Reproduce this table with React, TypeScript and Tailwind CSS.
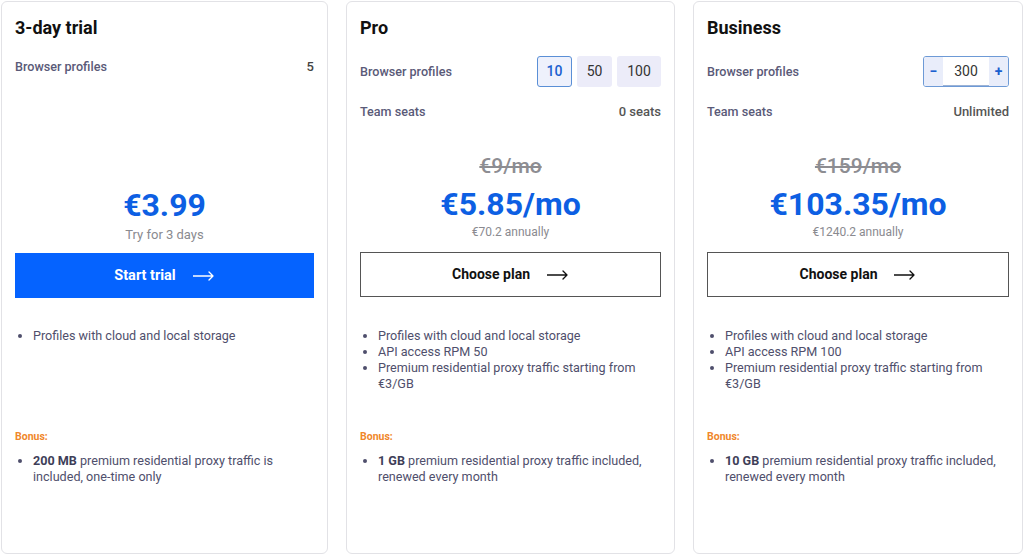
import { ReactNode } from "react"

const Arrow = ({ className = "" }: { className?: string }) => (
  <svg width="22" height="10" viewBox="0 0 22 10" fill="none" className={className}>
    <path d="M0 5h20M16 1l4 4-4 4" stroke="currentColor" strokeWidth="1.3" strokeLinecap="round" strokeLinejoin="round" />
  </svg>
)

function Row({ label, children, tall }: { label: string; children: ReactNode; tall?: boolean }) {
  return (
    <div className={`flex items-center justify-between ${tall ? "h-[31px]" : "h-4"}`}>
      <span className="text-[12.6px] leading-4 text-[#5a5a78] font-medium">{label}</span>
      {children}
    </div>
  )
}

function Features({ items }: { items: ReactNode[] }) {
  return (
    <ul className="list-disc pl-[18px] text-[12.6px] leading-4 text-[#4f4f6c] marker:text-[#4f4f6c]">
      {items.map((it, i) => (
        <li key={i}>{it}</li>
      ))}
    </ul>
  )
}

function Bonus({ children }: { children: ReactNode }) {
  return (
    <>
      <div className="text-[10.5px] leading-[14px] font-bold text-[#f0872a]">Bonus:</div>
      <div className="mt-[9px]">
        <Features items={[children]} />
      </div>
    </>
  )
}

function ChooseBtn() {
  return (
    <button className="w-full h-[45px] border border-[#555] bg-white flex items-center justify-center gap-[17px] text-[14px] font-bold text-[#111]">
      Choose plan
      <Arrow />
    </button>
  )
}

function Card({ children }: { children: ReactNode }) {
  return (
    <div className="h-[553px] rounded-md border border-[#e2e2e6] bg-white px-[13px] pt-[14px] flex flex-col">
      {children}
    </div>
  )
}

export default function App() {
  return (
    <div
      className="w-[1024px] h-[557px] bg-white pt-[1px] px-[1px] grid grid-cols-[327px_329px_330px] gap-[18px] overflow-hidden"
      style={{ fontFamily: "Roboto, 'Noto Sans', sans-serif" }}
    >
      {/* Trial */}
      <Card>
        <div className="h-[104px]">
          <h2 className="text-[18px] leading-6 font-bold text-[#111]">3-day trial</h2>
          <div className="mt-[19px]">
            <Row label="Browser profiles">
              <span className="text-[13px] font-medium text-[#444]">5</span>
            </Row>
          </div>
        </div>
        <div className="h-[133px] flex flex-col items-center justify-end pb-[10px]">
          <div className="text-[32px] leading-9 font-bold text-[#0d5fe3]">€3.99</div>
          <div className="mt-1 text-[13px] leading-4 text-[#8a8a8f]">Try for 3 days</div>
        </div>
        <button className="w-full h-[45px] bg-[#0563ff] text-white flex items-center justify-center gap-[17px] text-[14.5px] font-bold">
          Start trial
          <Arrow />
        </button>
        <div className="h-[132px] pt-[30px]">
          <Features items={["Profiles with cloud and local storage"]} />
        </div>
        <Bonus>
          <b className="font-bold text-[#3e3e58]">200 MB</b> premium residential proxy traffic is included, one-time only
        </Bonus>
      </Card>

      {/* Pro */}
      <Card>
        <div className="h-[104px]">
          <h2 className="text-[18px] leading-6 font-bold text-[#111]">Pro</h2>
          <div className="mt-4">
            <Row label="Browser profiles" tall>
              <div className="flex gap-[5px] text-[14px]">
                <span className="w-[35px] h-[31px] flex items-center justify-center rounded-[3px] border border-[#5a8fd6] bg-[#eef1fc] text-[#1b60cf] font-medium">10</span>
                <span className="w-[35px] h-[31px] flex items-center justify-center rounded-[3px] bg-[#ececf9] text-[#333]">50</span>
                <span className="w-[44px] h-[31px] flex items-center justify-center rounded-[3px] bg-[#ececf9] text-[#333]">100</span>
              </div>
            </Row>
          </div>
          <div className="mt-[17px]">
            <Row label="Team seats">
              <span className="text-[13px] font-medium text-[#555]">0 seats</span>
            </Row>
          </div>
        </div>
        <div className="h-[132px] flex flex-col items-center justify-end pb-3">
          <div className="text-[21px] leading-6 font-medium text-[#8d8d92] line-through">€9/mo</div>
          <div className="mt-2 text-[32px] leading-9 font-bold text-[#0d5fe3]">€5.85/mo</div>
          <div className="mt-0.5 text-[12px] leading-4 text-[#8a8a8f]">€70.2 annually</div>
        </div>
        <ChooseBtn />
        <div className="h-[133px] pt-[31px]">
          <Features
            items={[
              "Profiles with cloud and local storage",
              "API access RPM 50",
              "Premium residential proxy traffic starting from €3/GB",
            ]}
          />
        </div>
        <Bonus>
          <b className="font-bold text-[#3e3e58]">1 GB</b> premium residential proxy traffic included, renewed every month
        </Bonus>
      </Card>

      {/* Business */}
      <Card>
        <div className="h-[104px]">
          <h2 className="text-[18px] leading-6 font-bold text-[#111]">Business</h2>
          <div className="mt-4">
            <Row label="Browser profiles" tall>
              <div className="flex h-[31px] w-[86px] rounded-[3px] border border-[#6d9ad6] overflow-hidden text-[14px]">
                <span className="w-[19px] flex items-center justify-center bg-[#e9edfa] text-[#1b60cf] font-bold">−</span>
                <span className="flex-1 flex items-center justify-center bg-white text-[#333] border-b border-[#9cb3d6]">300</span>
                <span className="w-[19px] flex items-center justify-center bg-[#e9edfa] text-[#1b60cf] font-bold">+</span>
              </div>
            </Row>
          </div>
          <div className="mt-[17px]">
            <Row label="Team seats">
              <span className="text-[13px] font-medium text-[#555]">Unlimited</span>
            </Row>
          </div>
        </div>
        <div className="h-[132px] flex flex-col items-center justify-end pb-3">
          <div className="text-[21px] leading-6 font-medium text-[#8d8d92] line-through">€159/mo</div>
          <div className="mt-2 text-[32px] leading-9 font-bold text-[#0d5fe3]">€103.35/mo</div>
          <div className="mt-0.5 text-[12px] leading-4 text-[#8a8a8f]">€1240.2 annually</div>
        </div>
        <ChooseBtn />
        <div className="h-[133px] pt-[31px]">
          <Features
            items={[
              "Profiles with cloud and local storage",
              "API access RPM 100",
              "Premium residential proxy traffic starting from €3/GB",
            ]}
          />
        </div>
        <Bonus>
          <b className="font-bold text-[#3e3e58]">10 GB</b> premium residential proxy traffic included, renewed every month
        </Bonus>
      </Card>
    </div>
  )
}
